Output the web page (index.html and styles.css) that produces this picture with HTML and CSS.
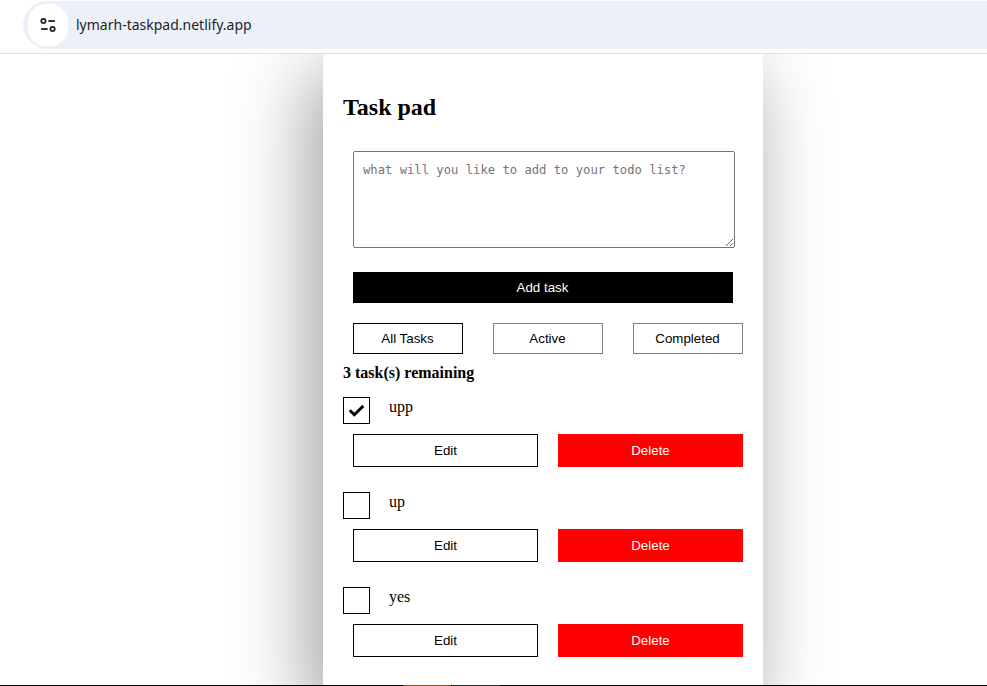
FILE: index.html
```
<!DOCTYPE html>
<html lang="en">
<head>
<meta charset="utf-8">
<title>Task pad</title>
<link rel="stylesheet" href="styles.css">
</head>
<body>
<header class="toolbar">
  <div class="address">
    <div class="site-info">
      <svg width="16" height="16" viewBox="0 0 16 16" fill="none" stroke="#1f1f1f" stroke-width="1.8">
        <circle cx="3.4" cy="4" r="2.1"/><path d="M8.3 4h6.7"/>
        <circle cx="12.6" cy="12" r="2.1"/><path d="M1 12h6.7"/>
      </svg>
    </div>
    <span class="url">lymarh-taskpad.netlify.app</span>
  </div>
</header>
<main class="page">
  <section class="card">
    <h1 class="title">Task pad</h1>
    <textarea class="entry" placeholder="what will you like to add to your todo list?"></textarea>
    <button class="add">Add task</button>
    <div class="filters">
      <button class="filter selected">All Tasks</button>
      <button class="filter">Active</button>
      <button class="filter">Completed</button>
    </div>
    <h2 class="remaining">3 task(s) remaining</h2>
    <div class="tasks">
      <article class="task">
        <div class="task-head">
          <span class="box"><svg width="25" height="25" viewBox="0 0 25 25" fill="none" stroke="#000" stroke-width="2.9"><path d="M5.8 12.2l4.5 4.5 9-8.8"/></svg></span>
          <span class="label">upp</span>
        </div>
        <div class="actions"><button class="edit">Edit</button><button class="delete">Delete</button></div>
      </article>
      <article class="task">
        <div class="task-head"><span class="box"></span><span class="label">up</span></div>
        <div class="actions"><button class="edit">Edit</button><button class="delete">Delete</button></div>
      </article>
      <article class="task">
        <div class="task-head"><span class="box"></span><span class="label">yes</span></div>
        <div class="actions"><button class="edit">Edit</button><button class="delete">Delete</button></div>
      </article>
    </div>
  </section>
</main>
<footer class="taskbar"><span class="tab-brown"></span><span class="tab-gray"></span></footer>
</body>
</html>
```
FILE: styles.css
```
* { box-sizing: border-box; }
body {
  margin: 0;
  height: 686px;
  display: flex;
  flex-direction: column;
  overflow: hidden;
  background: #fff;
  color: #000;
  font-family: "Liberation Serif", serif;
}
.toolbar {
  flex: none;
  height: 54px;
  padding: 1px 0 0 23px;
  border-bottom: 1px solid #dfe0e3;
}
.address {
  display: flex;
  align-items: center;
  height: 48px;
  padding-left: 5px;
  background: #ecf0f9;
  border-radius: 24px 0 0 24px;
}
.site-info {
  display: flex;
  align-items: center;
  justify-content: center;
  width: 40px;
  height: 42px;
  border-radius: 18px;
  background: #fff;
}
.url {
  margin-left: 8px;
  padding-bottom: 2px;
  color: #1f1f1f;
  font: 14px "Noto Sans", sans-serif;
}
.page {
  flex: 1;
  min-height: 0;
  overflow: hidden;
  padding-left: 323px;
}
.card {
  width: 440px;
  height: 645px;
  padding: 40px 20px 0;
  background: #fff;
  box-shadow: -12px 20px 72px rgba(0, 0, 0, .39);
}
.title {
  margin: 0 0 30px;
  font-size: 24px;
  line-height: 27px;
}
.entry {
  display: block;
  width: 382px;
  height: 97px;
  margin: 0 0 24px 10px;
  padding: 10px 9px;
  border: 1px solid #767676;
  border-radius: 2px;
  font: 12.2px/16px "DejaVu Sans Mono", monospace;
}
.entry::placeholder { color: #757575; }
button {
  padding: 0 1px 0 0;
  font: 13.333px "Liberation Sans", sans-serif;
  color: #000;
  background: #fff;
  border: 1px solid #000;
}
.add {
  display: block;
  width: 380px;
  height: 31px;
  margin: 0 0 20px 10px;
  background: #000;
  color: #fff;
}
.filters {
  display: flex;
  gap: 30px;
  padding-left: 10px;
}
.filter {
  width: 110px;
  height: 31px;
  border-color: #808080;
}
.filter.selected { border-color: #000; }
.remaining {
  margin: 10px 0 15px;
  font-size: 16px;
  line-height: 18px;
}
.tasks {
  display: flex;
  flex-direction: column;
  gap: 25px;
}
.task-head { display: flex; }
.box {
  width: 27px;
  height: 27px;
  border: 1px solid #000;
}
.box svg { display: block; }
.label {
  margin-left: 19px;
  font-size: 16px;
  line-height: 19px;
}
.actions {
  display: flex;
  gap: 20px;
  padding: 10px 0 0 10px;
}
.edit, .delete { width: 185px; height: 33px; padding: 0; }
.delete {
  border-color: #f00;
  background: #f00;
  color: #fff;
}
.taskbar {
  flex: none;
  display: flex;
  gap: 1px;
  height: 1px;
  padding-left: 403px;
  background: #000;
}
.tab-brown { width: 48px; background: #8a5628; }
.tab-gray { width: 48px; background: #333; }
```
